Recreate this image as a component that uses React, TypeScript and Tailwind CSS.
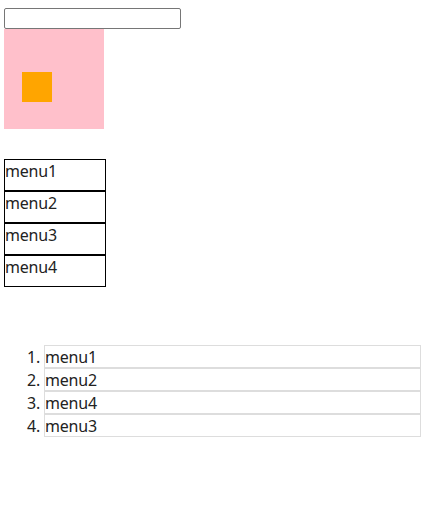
import * as React from "react";

const menus = ["menu1", "menu2", "menu3", "menu4"];
const sorted = ["menu1", "menu2", "menu4", "menu3"];

export default function App() {
  return (
    <div className="min-h-[530px] bg-white pl-[4px] pr-[5px] pt-[8px] font-['Segoe_UI','Noto_Sans',sans-serif] text-[16px] leading-[21px] text-[#222]">
      <input
        type="text"
        className="block h-[21px] w-[177px] rounded-[2px] border border-[#767676] bg-white px-[2px] text-[13px] outline-none"
      />
      <div className="flex h-[100px] w-[100px] items-center bg-[#ffc0cb] pl-[18px] pt-[16px]">
        <div className="h-[30px] w-[30px] bg-[#ffa500]" />
      </div>

      <div className="mt-[30px] w-[102px]">
        {menus.map((m) => (
          <div key={m} className="h-[32px] border border-black pt-[1px] tracking-[-0.2px]">
            {m}
          </div>
        ))}
      </div>

      <ol className="mt-[58px] list-decimal pl-[40px]">
        {sorted.map((m) => (
          <li key={m} className="h-[23px] border border-[#dddddd] pt-[1px] leading-[20px] tracking-[-0.2px]">
            {m}
          </li>
        ))}
      </ol>
    </div>
  );
}
